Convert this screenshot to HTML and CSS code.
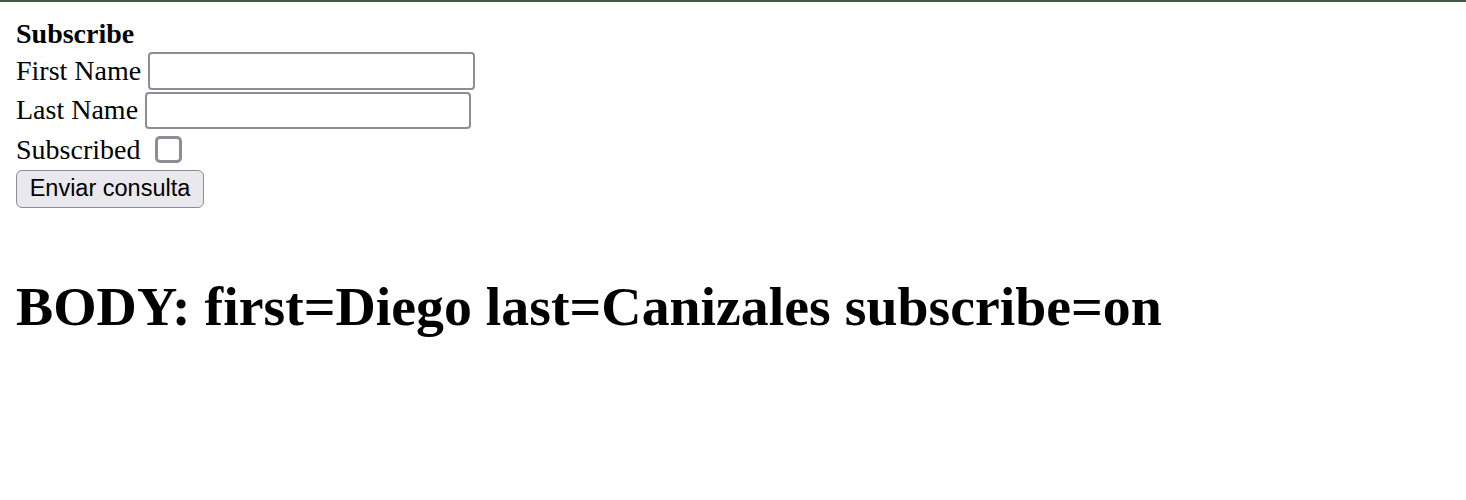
FILE: index.html
```html
<!DOCTYPE html>
<html>
<head>
<meta charset="utf-8">
<link rel="stylesheet" href="styles.css">
</head>
<body>
<div class="topline"></div>
<main class="page">
  <form class="form">
    <div class="title">Subscribe</div>
    <div class="row row-first">
      <label class="label" for="first">First Name</label>
      <input class="field field-first" id="first" type="text">
    </div>
    <div class="row row-last">
      <label class="label" for="last">Last Name</label>
      <input class="field field-last" id="last" type="text">
    </div>
    <div class="row row-sub">
      <label class="label" for="sub">Subscribed</label>
      <span class="check"></span>
    </div>
    <button class="btn" type="button">Enviar consulta</button>
  </form>
  <h1 class="result">BODY: first=Diego last=Canizales subscribe=on</h1>
</main>
</body>
</html>
```
FILE: styles.css
```css
html, body {
  margin: 0;
  padding: 0;
  background: #ffffff;
}
body {
  font-family: "Liberation Serif", "Times New Roman", serif;
  font-size: 28px;
  color: #000;
}
.topline {
  height: 2px;
  background: #475747;
}
.page {
  padding: 14px 0 0 16px;
}
.form {
  display: flex;
  flex-direction: column;
  align-items: flex-start;
  margin: 0;
}
.title {
  font-weight: bold;
  line-height: 36px;
  height: 32px;
}
.row {
  display: flex;
  align-items: flex-start;
}
.label {
  line-height: 36px;
  height: 32px;
  white-space: nowrap;
}
.row-first { height: 44px; }
.row-first .label { margin-top: 5px; }
.row-first .field { margin-top: 4px; margin-left: 7px; width: 327px; }
.row-last { height: 39px; }
.row-last .label { margin-top: 0; }
.row-last .field { margin-left: 7px; width: 326px; height: 37px; }
.field {
  box-sizing: border-box;
  height: 38px;
  border: 2px solid #8e8d96;
  border-radius: 4px;
  background: #fff;
  padding: 0 6px;
  font-size: 20px;
  outline: none;
}
.row-sub { height: 39px; }
.row-sub .label { margin-top: 1px; }
.check {
  box-sizing: border-box;
  width: 27px;
  height: 27px;
  margin-top: 5px;
  margin-left: 15px;
  border: 3px solid #8e8d96;
  border-radius: 5px;
  background: #fff;
}
.btn {
  box-sizing: border-box;
  width: 188px;
  height: 38px;
  padding: 0;
  border: 1.5px solid #8e8d96;
  border-radius: 6px;
  background: #e9e8ed;
  color: #000;
  font-family: "Liberation Sans", Arial, sans-serif;
  font-size: 23.5px;
  line-height: 1;
}
.result {
  margin: 66px 0 0 0;
  font-size: 55.8px;
  font-weight: bold;
  line-height: 64px;
  white-space: nowrap;
}
```
